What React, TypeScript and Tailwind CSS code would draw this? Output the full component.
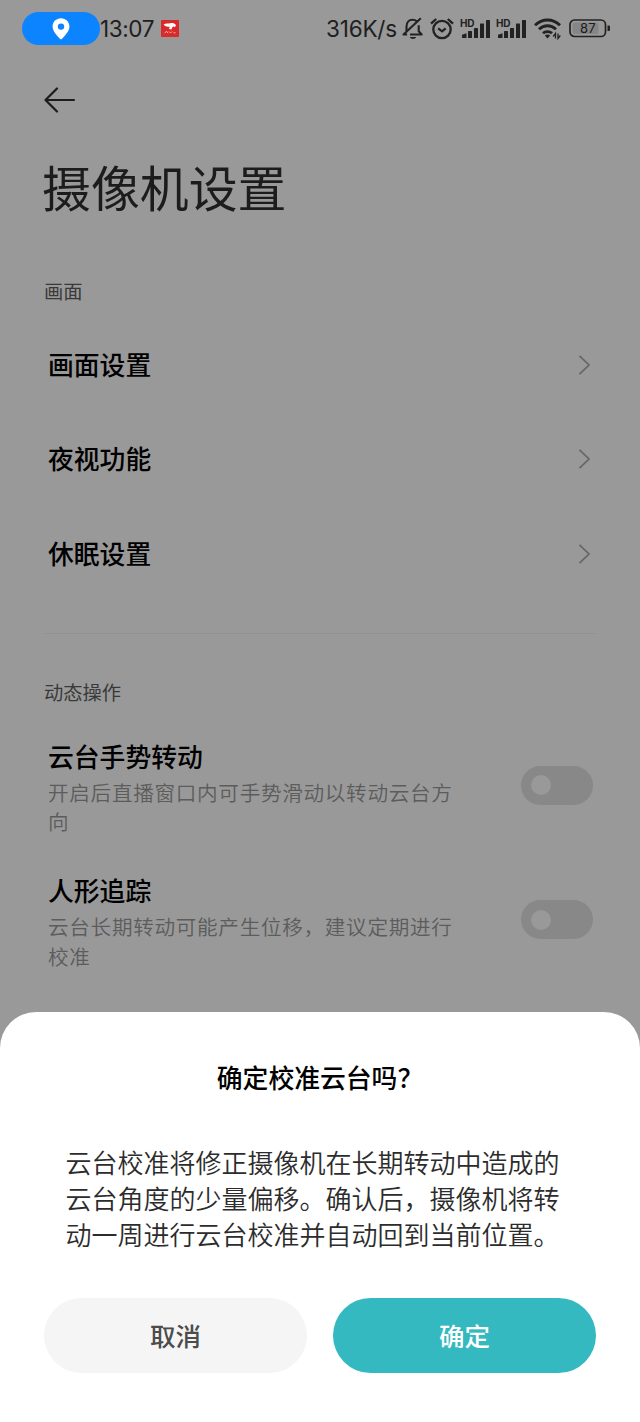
import { useState } from 'react';

function LocationPill() {
  return (
    <div className="w-[78px] h-[33px] rounded-full bg-[#0d84ff] flex items-center justify-center">
      <svg width="18" height="22" viewBox="0 0 18 22">
        <path
          d="M9 0.3C4.200 0.300 0.600 3.900 0.600 8.400c0 5 4.600 9.200 7.300 12.300.6.7 1.600.7 2.200 0C12.800 17.600 17.400 13.400 17.400 8.400 17.400 3.900 13.800 0.300 9 0.300Z"
          fill="#fff"
        />
        <circle cx="9" cy="8.600" r="3.200" fill="#0d84ff" />
      </svg>
    </div>
  );
}

function AppBadge() {
  return (
    <svg width="18" height="17" viewBox="0 0 18 17">
      <rect width="18" height="17" rx="1" fill="#d8292b" />
      <path d="M2.500 4.500C5 3 7 3.800 9 3.200 11 2.600 13.500 3 15 5L14 7.200C12.500 5.800 11 6.800 10.500 9.500L8 9 8.800 6.500C6.500 7.200 4.500 6.500 2.500 4.500Z" fill="#fff" />
      <path d="M3.500 13.200l2-2 1.500 2M8 11.500l1.500 1.500 1.500-1.500M12.500 12.800h2" stroke="#f6b9b5" fill="none" />
    </svg>
  );
}

function MutedBell() {
  return (
    <svg width="22" height="24" viewBox="0 0 22 24" fill="none" stroke="#222" strokeWidth="2.100">
      <path d="M4.500 14V9.500C4.500 5.500 6.800 2.700 10.500 2.700c1.700 0 3.200.6 4.300 1.600" />
      <path d="M16.700 8.200v6l3 3.300H8" strokeLinejoin="round" />
      <path d="M18.800 1.200L1.500 17.500h3.600" strokeLinejoin="round" />
      <path d="M7.800 20h6.400c-.8 1.400-1.900 1.900-3.200 1.900s-2.400-.5-3.200-1.900Z" fill="#222" stroke="none" />
    </svg>
  );
}

function AlarmIcon() {
  return (
    <svg width="24" height="22" viewBox="0 0 24 22" fill="none" stroke="#222" strokeWidth="2.300">
      <circle cx="12" cy="11.500" r="8.700" />
      <path d="M1 5.700L6.200 1M23 5.700L17.800 1" />
      <path d="M8.200 10.300l3.900 3 3.600-3" />
    </svg>
  );
}

function SignalIcon() {
  return (
    <svg width="31" height="22" viewBox="0 0 31 22" fill="#222">
      <text x="0" y="8.500" fontSize="10" fontWeight="700" fontFamily="Inter, sans-serif" textLength="14.500">
        HD
      </text>
      <path d="M2 16.800l4.500-1.500V20H2Z" />
      <rect x="8" y="13" width="4" height="7" rx="0.500" />
      <rect x="14" y="10" width="4" height="10" rx="0.500" />
      <rect x="20" y="5.500" width="4" height="14.500" rx="0.500" />
      <rect x="26" y="2" width="4" height="18" rx="0.500" />
    </svg>
  );
}

function WifiIcon() {
  return (
    <svg width="27" height="22" viewBox="0 0 27 22" fill="none" stroke="#222" strokeWidth="2.900">
      <path d="M1 7.200C8.200 0.200 18.800 0.200 26 7.200" />
      <path d="M5 11.300C10 6.600 17 6.600 22 11.300" />
      <path d="M9 15.300C11.500 13 15.500 13 18 15.300" />
      <path d="M10.800 17.600C12.400 16.200 14.600 16.200 16.200 17.600L13.500 20.500Z" fill="#222" stroke="none" />
      <path d="M21.500 20.500V15.500l-2.300 3M24 15.500v5l2.300-3" strokeWidth="1.300" />
    </svg>
  );
}

function BatteryIcon() {
  return (
    <svg width="42" height="19" viewBox="0 0 42 19">
      <rect x="1" y="1" width="35.500" height="16.500" rx="4.500" fill="none" stroke="#222" strokeWidth="1.700" />
      <rect x="3.500" y="3.500" width="26" height="11.500" rx="2" fill="#868686" />
      <path d="M38.500 6.500h1.200c.8 0 1.300.5 1.300 1.300v3c0 .8-.5 1.300-1.300 1.300h-1.200Z" fill="#222" />
      <text x="18.800" y="14" textAnchor="middle" fontSize="13" fontWeight="400" fontFamily="Inter, sans-serif" fill="#1c1c1c">
        87
      </text>
    </svg>
  );
}

function StatusBar() {
  return (
    <div className="h-[57px] pl-[22px] pr-[29px] flex items-center text-[#202020] font-['Inter','Noto_Sans_CJK_SC',sans-serif] text-[22.500px] font-normal">
      <LocationPill />
      <span className="w-[61px] whitespace-nowrap tracking-[-0.4px]">13:07</span>
      <AppBadge />
      <div className="ml-auto flex items-center">
        <span className="w-[76px] whitespace-nowrap tracking-[-0.2px]">316K/s</span>
        <MutedBell />
        <div className="w-[6px]" />
        <AlarmIcon />
        <div className="w-[6px]" />
        <SignalIcon />
        <div className="w-[5px]" />
        <SignalIcon />
        <div className="w-[7px]" />
        <WifiIcon />
        <div className="w-[8px]" />
        <BatteryIcon />
      </div>
    </div>
  );
}

function LinkRow({ label }: { label: string }) {
  return (
    <button className="w-full h-[94.500px] pl-[4px] pr-[5px] flex items-center justify-between text-left">
      <span className="text-[25.800px] font-medium text-black">{label}</span>
      <svg width="13" height="20" viewBox="0 0 13 20" fill="none" stroke="#666" strokeWidth="1.700" className="mt-px">
        <path d="M1.500 0.800L11 10 1.500 19.200" />
      </svg>
    </button>
  );
}

type SwitchRowProps = {
  label: string;
  description: string;
  checked: boolean;
  onChange: () => void;
};

function SwitchRow({ label, description, checked, onChange }: SwitchRowProps) {
  return (
    <div className="h-[134.500px] pl-[4px] pr-[3px] flex items-start justify-between">
      <div className="w-[415px]">
        <div className="text-[25.800px] leading-[38px] font-medium text-black">{label}</div>
        <div className="text-[20.600px] tracking-[0.7px] leading-[29.500px] font-[350] text-[#5c5c5c] mt-[3px]">{description}</div>
      </div>
      <button
        role="switch"
        aria-checked={checked}
        aria-label={label}
        onClick={onChange}
        className={`mt-[29px] w-[72px] h-[39px] rounded-full px-[10px] flex items-center ${
          checked ? 'bg-[#1f7276] justify-end' : 'bg-[#888888] justify-start'
        }`}
      >
        <span className="w-[20px] h-[20px] rounded-full bg-[#999999]" />
      </button>
    </div>
  );
}

export default function App() {
  const links = ['画面设置', '夜视功能', '休眠设置'];
  const [gesture, setGesture] = useState(false);
  const [tracking, setTracking] = useState(false);

  return (
    <div className="w-[640px] h-[1422px] flex flex-col overflow-hidden bg-[#999999] font-['Noto_Sans_CJK_SC',sans-serif]">
      <StatusBar />

      <main className="h-[955px] px-11">
        <button aria-label="返回" className="block pt-[30px]">
          <svg width="32" height="26" viewBox="0 0 32 26" fill="none" stroke="#1c1c1c" strokeWidth="2.200" strokeLinecap="round">
            <path d="M13 1.500L1.500 13 13 24.500M1.500 13H30" strokeLinejoin="round" />
          </svg>
        </button>

        <h1 className="mt-[37px] -ml-[2px] h-[72px] leading-[72px] text-[48.900px] font-normal text-[#1c1c1c]">摄像机设置</h1>

        <h2 className="mt-[55px] h-[28px] leading-[28px] text-[19.300px] text-[#393939]">画面</h2>
        <div className="mt-[12px]">
          {links.map((label) => (
            <LinkRow key={label} label={label} />
          ))}
        </div>

        <div className="mt-[32px] h-px bg-[#919191]" />

        <h2 className="mt-[44px] h-[28px] leading-[28px] text-[19.300px] text-[#393939]">动态操作</h2>
        <div className="mt-[31px]">
          <SwitchRow
            label="云台手势转动"
            description="开启后直播窗口内可手势滑动以转动云台方向"
            checked={gesture}
            onChange={() => setGesture(!gesture)}
          />
          <SwitchRow
            label="人形追踪"
            description="云台长期转动可能产生位移，建议定期进行校准"
            checked={tracking}
            onChange={() => setTracking(!tracking)}
          />
        </div>
      </main>

      {/* Bottom sheet */}
      <section role="dialog" className="h-[410px] bg-white rounded-t-[36px] px-11 flex flex-col">
        <h3 className="mt-[46px] h-[38px] leading-[38px] text-center text-[25.800px] font-medium text-black">确定校准云台吗？</h3>
        <p className="mt-[48px] px-[21.500px] text-[26px] leading-[36.200px] font-[350] text-[#2c2c2c] whitespace-nowrap">
          云台校准将修正摄像机在长期转动中造成的
          <br />
          云台角度的少量偏移。确认后，摄像机将转
          <br />
          动一周进行云台校准并自动回到当前位置。
        </p>
        <div className="mt-auto mb-[49px] flex gap-[26px]">
          <button className="flex-1 h-[75px] rounded-full bg-[#f5f5f5] text-[25.500px] font-medium text-[#4c4c4c]">取消</button>
          <button className="flex-1 h-[75px] rounded-full bg-[#34b9c1] text-[25.500px] font-medium text-white">确定</button>
        </div>
      </section>
    </div>
  );
}
